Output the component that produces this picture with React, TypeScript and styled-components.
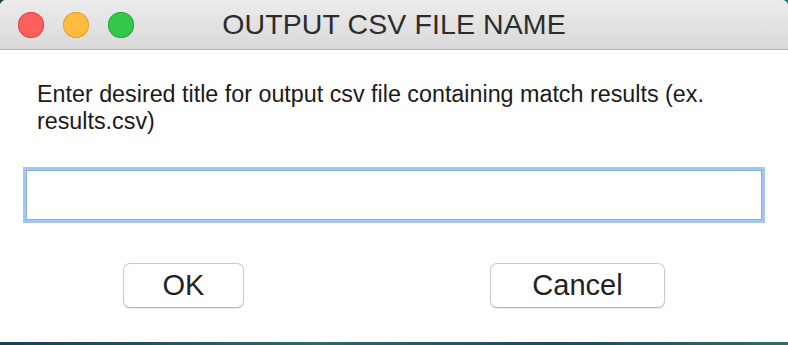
import React from "react"
import styled, { createGlobalStyle } from "styled-components"

const GlobalStyle = createGlobalStyle`
    html, body {
        margin: 0;
        padding: 0;
        background: #1f4d5c;
        font-family: "Liberation Sans", Arial, sans-serif;
    }
`

const Desktop = styled.div`
    width: 788px;
    height: 345px;
    background: linear-gradient(90deg, #1b3f52, #2a6a6a 40%, #1c4a5c 70%, #2d6e66);
    overflow: hidden;
`

const Window = styled.div`
    width: 788px;
    height: 342px;
    background: #ffffff;
    border-radius: 6px 6px 0 0;
    overflow: hidden;
    display: flex;
    flex-direction: column;
`

const TitleBar = styled.div`
    height: 49px;
    flex-shrink: 0;
    display: flex;
    align-items: center;
    position: relative;
    background: linear-gradient(180deg, #ececec, #d9d9d9);
    border-bottom: 1px solid #b3b3b3;
`

const Lights = styled.div`
    display: flex;
    gap: 19px;
    padding-left: 18px;
`

const Light = styled.span<{ $fill: string; $edge: string }>`
    width: 26px;
    height: 26px;
    border-radius: 50%;
    background: ${p => p.$fill};
    box-shadow: inset 0 0 0 1px ${p => p.$edge};
`

const Title = styled.div`
    position: absolute;
    left: 0;
    right: 0;
    top: 0;
    bottom: 0;
    display: flex;
    align-items: center;
    justify-content: center;
    font-size: 28.5px;
    letter-spacing: 0.1px;
    color: #2c2c2c;
    pointer-events: none;
`

const Body = styled.div`
    flex: 1;
    display: flex;
    flex-direction: column;
    padding: 31px 23px 0 23px;
`

const Prompt = styled.p`
    margin: 0 0 0 14px;
    font-size: 23.3px;
    line-height: 27px;
    color: #1a1a1a;
    max-width: 720px;
`

const NameInput = styled.input`
    margin-top: 32px;
    height: 56px;
    width: 742px;
    box-sizing: border-box;
    border: 3px solid #a3c6f1;
    box-shadow: inset 0 0 0 1px #86b0e6;
    outline: none;
    background: #fff;
    font-size: 22px;
    font-family: inherit;
    padding: 0 8px;
`

const Actions = styled.div`
    display: flex;
    margin-top: 40px;
    padding-left: 100px;
    gap: 246px;
`

const Button = styled.button<{ $w: number }>`
    width: ${p => p.$w}px;
    height: 45px;
    box-sizing: border-box;
    border: 1px solid #cacaca;
    border-bottom-color: #b5b5b5;
    border-radius: 7px;
    background: #ffffff;
    box-shadow: 0 1px 1px rgba(0, 0, 0, 0.08);
    font-family: inherit;
    font-size: 29px;
    color: #222;
    padding: 0;
`

export default function App() {
    return (
        <>
            <GlobalStyle />
            <Desktop>
                <Window>
                    <TitleBar>
                        <Lights>
                            <Light $fill="#fc605c" $edge="#de4a46" />
                            <Light $fill="#fdbc40" $edge="#dea236" />
                            <Light $fill="#34c84a" $edge="#28a83b" />
                        </Lights>
                        <Title>OUTPUT CSV FILE NAME</Title>
                    </TitleBar>
                    <Body>
                        <Prompt>
                            Enter desired title for output csv file containing match results (ex. results.csv)
                        </Prompt>
                        <NameInput type="text" />
                        <Actions>
                            <Button $w={121}>OK</Button>
                            <Button $w={175}>Cancel</Button>
                        </Actions>
                    </Body>
                </Window>
            </Desktop>
        </>
    )
}
